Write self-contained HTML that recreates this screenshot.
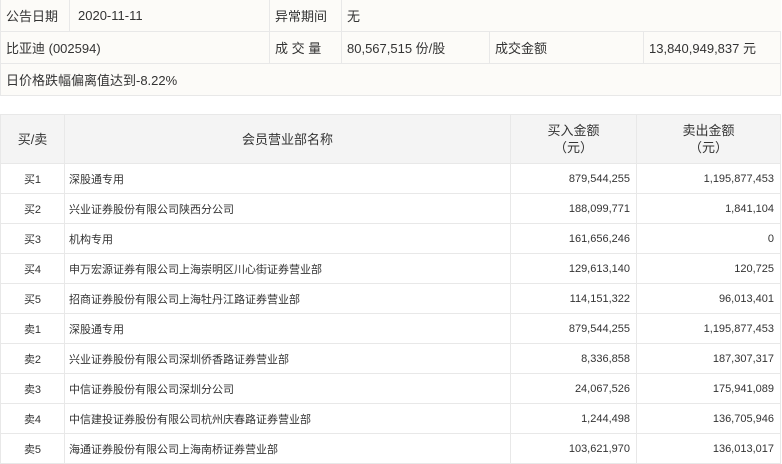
<!DOCTYPE html>
<html><head><meta charset="utf-8"><style>
body{margin:0;width:782px;height:461px;overflow:hidden;background:#fff;font-family:"Liberation Sans","Noto Sans CJK SC",sans-serif;color:#333}
table{border-collapse:collapse;position:absolute;left:0;table-layout:fixed}
td{border:1px solid #e8e8e8;padding:0;overflow:hidden;white-space:nowrap}
#t1{top:-1px;width:780px;background:#fcfbf8;font-size:13px}
#t1 td{height:31px;padding-left:5px}
#t2{top:114px;width:780px;font-size:11px}
#t2 td{height:29px}
#t2 tr.h td{height:48px;background:#f4f4f4;font-size:13px;text-align:center;line-height:17px}
.c{text-align:center}.r{text-align:right;padding-right:6px!important}.l{padding-left:4px!important}
</style></head><body>
<table id="t1">
<colgroup><col style="width:69px"><col style="width:200px"><col style="width:72px"><col style="width:148px"><col style="width:154px"><col style="width:137px"></colgroup>
<tr><td>公告日期</td><td style="padding-left:8px">2020-11-11</td><td colspan="1">异常期间</td><td colspan="3" style="border-right:none">无</td></tr>
<tr><td colspan="2">比亚迪 (002594)</td><td>成 交 量</td><td>80,567,515 份/股</td><td>成交金额</td><td>13,840,949,837 元</td></tr>
<tr><td colspan="6">日价格跌幅偏离值达到-8.22%</td></tr>
</table>
<table id="t2">
<colgroup><col style="width:64px"><col style="width:446px"><col style="width:126px"><col style="width:144px"></colgroup>
<tr class="h"><td>买/卖</td><td>会员营业部名称</td><td>买入金额<br>（元）</td><td>卖出金额<br>（元）</td></tr>
<tr><td class="c">买1</td><td class="l">深股通专用</td><td class="r">879,544,255</td><td class="r">1,195,877,453</td></tr>
<tr><td class="c">买2</td><td class="l">兴业证券股份有限公司陕西分公司</td><td class="r">188,099,771</td><td class="r">1,841,104</td></tr>
<tr><td class="c">买3</td><td class="l">机构专用</td><td class="r">161,656,246</td><td class="r">0</td></tr>
<tr><td class="c">买4</td><td class="l">申万宏源证券有限公司上海崇明区川心街证券营业部</td><td class="r">129,613,140</td><td class="r">120,725</td></tr>
<tr><td class="c">买5</td><td class="l">招商证券股份有限公司上海牡丹江路证券营业部</td><td class="r">114,151,322</td><td class="r">96,013,401</td></tr>
<tr><td class="c">卖1</td><td class="l">深股通专用</td><td class="r">879,544,255</td><td class="r">1,195,877,453</td></tr>
<tr><td class="c">卖2</td><td class="l">兴业证券股份有限公司深圳侨香路证券营业部</td><td class="r">8,336,858</td><td class="r">187,307,317</td></tr>
<tr><td class="c">卖3</td><td class="l">中信证券股份有限公司深圳分公司</td><td class="r">24,067,526</td><td class="r">175,941,089</td></tr>
<tr><td class="c">卖4</td><td class="l">中信建投证券股份有限公司杭州庆春路证券营业部</td><td class="r">1,244,498</td><td class="r">136,705,946</td></tr>
<tr><td class="c">卖5</td><td class="l">海通证券股份有限公司上海南桥证券营业部</td><td class="r">103,621,970</td><td class="r">136,013,017</td></tr>
</table>
</body></html>
